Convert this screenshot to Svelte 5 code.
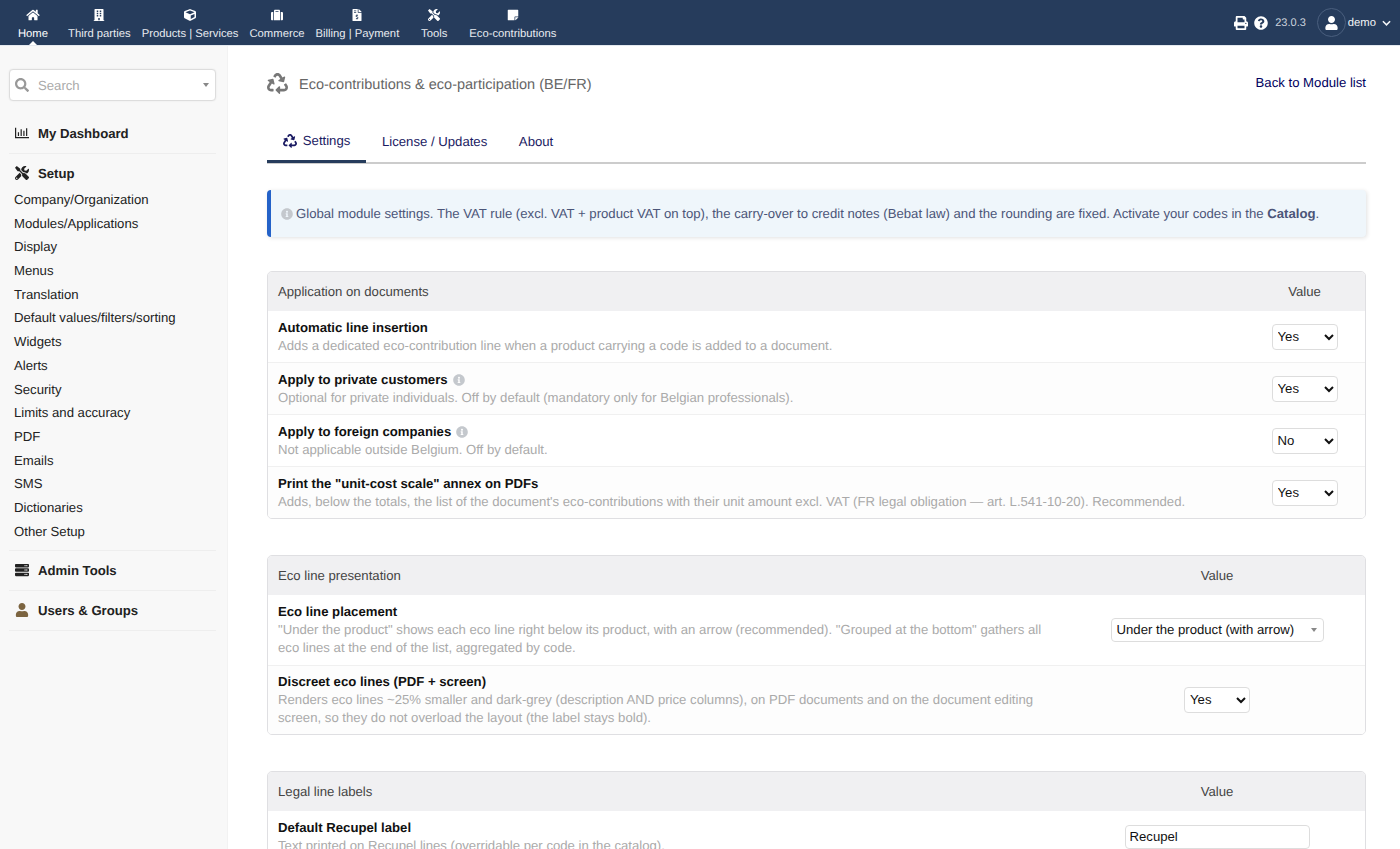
<script lang="ts">
const icons = {
  home: { w: 576, d: 'M280.37 148.26L96 300.11V464a16 16 0 0 0 16 16l112.06-.29a16 16 0 0 0 15.92-16V368a16 16 0 0 1 16-16h64a16 16 0 0 1 16 16v95.64a16 16 0 0 0 16 16.05L464 480a16 16 0 0 0 16-16V300L295.67 148.26a12.19 12.19 0 0 0-15.3 0zM571.6 251.47L488 182.56V44.05a12 12 0 0 0-12-12h-56a12 12 0 0 0-12 12v72.61L318.47 43a48 48 0 0 0-61 0L4.34 251.47a12 12 0 0 0-1.6 16.9l25.5 31A12 12 0 0 0 45.15 301l235.22-193.74a12.19 12.19 0 0 1 15.3 0L530.9 301a12 12 0 0 0 16.9-1.6l25.5-31a12 12 0 0 0-1.7-16.93z' },
  building: { w: 448, d: 'M436 480h-20V24c0-13.255-10.745-24-24-24H56C42.745 0 32 10.745 32 24v456H12c-6.627 0-12 5.373-12 12v20h448v-20c0-6.627-5.373-12-12-12zM128 76c0-6.627 5.373-12 12-12h40c6.627 0 12 5.373 12 12v40c0 6.627-5.373 12-12 12h-40c-6.627 0-12-5.373-12-12V76zm0 96c0-6.627 5.373-12 12-12h40c6.627 0 12 5.373 12 12v40c0 6.627-5.373 12-12 12h-40c-6.627 0-12-5.373-12-12v-40zm52 148h-40c-6.627 0-12-5.373-12-12v-40c0-6.627 5.373-12 12-12h40c6.627 0 12 5.373 12 12v40c0 6.627-5.373 12-12 12zm76 160h-64v-84c0-6.627 5.373-12 12-12h40c6.627 0 12 5.373 12 12v84zm64-172c0 6.627-5.373 12-12 12h-40c-6.627 0-12-5.373-12-12v-40c0-6.627 5.373-12 12-12h40c6.627 0 12 5.373 12 12v40zm0-96c0 6.627-5.373 12-12 12h-40c-6.627 0-12-5.373-12-12v-40c0-6.627 5.373-12 12-12h40c6.627 0 12 5.373 12 12v40zm0-96c0 6.627-5.373 12-12 12h-40c-6.627 0-12-5.373-12-12V76c0-6.627 5.373-12 12-12h40c6.627 0 12 5.373 12 12v40z' },
  cube: { w: 512, d: 'M239.1 6.3l-208 78c-18.7 7-31.1 25-31.1 45v225.1c0 18.2 10.3 34.8 26.5 42.9l208 104c13.5 6.8 29.4 6.8 42.9 0l208-104c16.3-8.1 26.5-24.8 26.5-42.9V129.3c0-20-12.4-37.9-31.1-44.9l-208-78C262 2.2 250 2.2 239.1 6.3zM256 68.4l192 72v1.1l-192 78-192-78v-1.1l192-72zm32 356V275.5l160-65v133.9l-160 80z' },
  suitcase: { w: 512, d: 'M128 480h256V80c0-26.5-21.5-48-48-48H176c-26.5 0-48 21.5-48 48v400zm64-384h128v32H192V96zm320 80v256c0 26.5-21.5 48-48 48h-48V128h48c26.5 0 48 21.5 48 48zM96 480H48c-26.5 0-48-21.5-48-48V176c0-26.5 21.5-48 48-48h48v352z' },
  invoice: { w: 384, d: 'M377 105L279.1 7c-4.5-4.5-10.6-7-17-7H256v128h128v-6.1c0-6.3-2.5-12.4-7-16.9zm-153 31V0H24C10.7 0 0 10.7 0 24v464c0 13.3 10.7 24 24 24h336c13.3 0 24-10.7 24-24V160H248c-13.2 0-24-10.8-24-24zM64 72c0-4.42 3.58-8 8-8h80c4.42 0 8 3.58 8 8v16c0 4.42-3.58 8-8 8H72c-4.42 0-8-3.58-8-8V72zm0 80v-16c0-4.42 3.58-8 8-8h80c4.42 0 8 3.58 8 8v16c0 4.42-3.58 8-8 8H72c-4.42 0-8-3.58-8-8zm144 263.88V440c0 4.42-3.58 8-8 8h-16c-4.42 0-8-3.58-8-8v-24.29c-11.29-.58-22.27-4.52-31.37-11.35-3.9-2.93-4.1-8.77-.57-12.14l11.75-11.21c2.77-2.64 6.89-2.76 10.13-.73 3.87 2.42 8.26 3.72 12.82 3.72h28.11c6.5 0 11.8-5.92 11.8-13.19 0-5.95-3.61-11.19-8.77-12.73l-45-13.5c-18.59-5.58-31.58-23.42-31.58-43.39 0-24.52 19.05-44.44 42.67-45.07V232c0-4.42 3.58-8 8-8h16c4.42 0 8 3.58 8 8v24.29c11.29.58 22.27 4.51 31.37 11.35 3.9 2.93 4.1 8.77.57 12.14l-11.75 11.21c-2.77 2.64-6.89 2.76-10.13.73-3.87-2.43-8.26-3.72-12.82-3.72h-28.11c-6.5 0-11.8 5.92-11.8 13.19 0 5.95 3.61 11.19 8.77 12.73l45 13.5c18.59 5.58 31.58 23.42 31.58 43.39 0 24.53-19.05 44.44-42.67 45.07z' },
  tools: { w: 512, d: 'M501.1 395.7L384 278.6c-23.1-23.1-57.6-27.6-85.4-13.9L192 158.1V96L64 0 0 64l96 128h62.1l106.6 106.6c-13.6 27.8-9.2 62.3 13.9 85.4l117.1 117.1c14.6 14.6 38.2 14.6 52.7 0l52.7-52.7c14.5-14.6 14.5-38.2 0-52.7zM331.7 225c28.3 0 54.9 11 74.9 31l19.4 19.4c15.8-6.9 30.8-16.5 43.8-29.5 37.1-37.1 49.7-89.3 37.9-136.7-2.2-9-13.5-12.1-20.1-5.5l-74.4 74.4-67.9-11.3L334 98.9l74.4-74.4c6.6-6.6 3.4-17.9-5.7-20.2-47.4-11.7-99.6.9-136.6 37.9-28.5 28.5-41.9 66.1-41.2 103.6l82.1 82.1c8.1-1.9 16.5-2.9 24.7-2.9zm-103.9 82l-56.7-56.7L18.7 402.8c-25 25-25 65.5 0 90.5s65.5 25 90.5 0l123.6-123.6c-7.6-19.9-9.9-41.6-5-62.7zM64 472c-13.2 0-24-10.8-24-24 0-13.3 10.7-24 24-24s24 10.7 24 24c0 13.2-10.7 24-24 24z' },
  note: { w: 448, d: 'M312 320h136V56c0-13.3-10.7-24-24-24H24C10.7 32 0 42.7 0 56v400c0 13.3 10.7 24 24 24h264V344c0-13.2 10.8-24 24-24zm129 55l-98 98c-4.5 4.5-10.6 7-17 7h-6V352h128v6.1c0 6.3-2.5 12.4-7 16.9z' },
  print: { w: 512, d: 'M448 192V77.25c0-8.49-3.37-16.62-9.37-22.63L393.37 9.37c-6-6-14.14-9.37-22.63-9.37H96C78.33 0 64 14.33 64 32v160c-35.35 0-64 28.65-64 64v112c0 8.84 7.16 16 16 16h48v96c0 17.67 14.33 32 32 32h320c17.67 0 32-14.33 32-32v-96h48c8.84 0 16-7.16 16-16V256c0-35.35-28.65-64-64-64zm-64 256H128v-96h256v96zm0-224H128V64h192v48c0 8.84 7.16 16 16 16h48v96zm48 72c-13.25 0-24-10.75-24-24 0-13.26 10.75-24 24-24s24 10.74 24 24c0 13.25-10.75 24-24 24z' },
  question: { w: 512, d: 'M504 256c0 136.997-111.043 248-248 248S8 392.997 8 256C8 119.083 119.043 8 256 8s248 111.083 248 248zM262.655 90c-54.497 0-89.255 22.957-116.549 63.758-3.536 5.286-2.353 12.415 2.715 16.258l34.699 26.31c5.205 3.947 12.621 3.008 16.665-2.122 17.864-22.658 30.113-35.797 57.303-35.797 20.429 0 45.698 13.148 45.698 32.958 0 14.976-12.363 22.667-32.534 33.976C247.128 238.528 216 254.941 216 296v4c0 6.627 5.373 12 12 12h56c6.627 0 12-5.373 12-12v-1.333c0-28.462 83.186-29.647 83.186-106.667 0-58.002-60.165-102-116.531-102zM256 338c-25.365 0-46 20.635-46 46 0 25.364 20.635 46 46 46s46-20.636 46-46c0-25.365-20.635-46-46-46z' },
  user: { w: 448, d: 'M224 256c70.7 0 128-57.3 128-128S294.7 0 224 0 96 57.3 96 128s57.3 128 128 128zm89.6 32h-16.7c-22.2 10.2-46.9 16-72.9 16s-50.6-5.8-72.9-16h-16.7C60.2 288 0 348.2 0 422.4V464c0 26.5 21.5 48 48 48h352c26.5 0 48-21.5 48-48v-41.6c0-74.2-60.2-134.4-134.4-134.4z' },
  search: { w: 512, d: 'M505 442.7L405.3 343c-4.5-4.5-10.6-7-17-7H372c27.6-35.3 44-79.7 44-128C416 93.1 322.9 0 208 0S0 93.1 0 208s93.1 208 208 208c48.3 0 92.7-16.4 128-44v16.3c0 6.4 2.5 12.5 7 17l99.7 99.7c9.4 9.4 24.6 9.4 33.9 0l28.3-28.3c9.4-9.4 9.4-24.6.1-34zM208 336c-70.7 0-128-57.2-128-128 0-70.7 57.2-128 128-128 70.7 0 128 57.2 128 128 0 70.7-57.2 128-128 128z' },
  chart: { w: 512, d: 'M0 64h44v340h468v44H0zM104 224h44v140h-44zM204 120h44v244h-44zM304 176h44v188h-44zM404 80h44v284h-44z' },
  server: { w: 512, d: 'M480 160H32c-17.673 0-32-14.327-32-32V64c0-17.673 14.327-32 32-32h448c17.673 0 32 14.327 32 32v64c0 17.673-14.327 32-32 32zm-48-88c-13.255 0-24 10.745-24 24s10.745 24 24 24 24-10.745 24-24-10.745-24-24-24zm-64 0c-13.255 0-24 10.745-24 24s10.745 24 24 24 24-10.745 24-24-10.745-24-24-24zm112 248H32c-17.673 0-32-14.327-32-32v-64c0-17.673 14.327-32 32-32h448c17.673 0 32 14.327 32 32v64c0 17.673-14.327 32-32 32zm-48-88c-13.255 0-24 10.745-24 24s10.745 24 24 24 24-10.745 24-24-10.745-24-24-24zm-64 0c-13.255 0-24 10.745-24 24s10.745 24 24 24 24-10.745 24-24-10.745-24-24-24zm112 248H32c-17.673 0-32-14.327-32-32v-64c0-17.673 14.327-32 32-32h448c17.673 0 32 14.327 32 32v64c0 17.673-14.327 32-32 32zm-48-88c-13.255 0-24 10.745-24 24s10.745 24 24 24 24-10.745 24-24-10.745-24-24-24zm-64 0c-13.255 0-24 10.745-24 24s10.745 24 24 24 24-10.745 24-24-10.745-24-24-24z' },
  recycle: { w: 512, d: 'M184.561 261.903c3.232 13.997-12.123 24.635-24.068 17.168l-40.736-25.455-50.867 81.402C55.606 356.273 70.96 384 96.012 384H148c6.627 0 12 5.373 12 12v40c0 6.627-5.373 12-12 12H96.115c-75.334 0-121.302-83.048-81.408-146.88l50.822-81.388-40.725-25.448c-12.081-7.547-8.966-25.961 4.879-29.158l110.237-25.45c8.611-1.988 17.201 3.381 19.189 11.99l25.452 110.237zm98.561-182.915l41.289 66.076-40.74 25.457c-12.051 7.528-9 25.953 4.879 29.158l110.237 25.45c8.672 1.999 17.215-3.438 19.189-11.99l25.45-110.237c3.197-13.844-11.99-24.719-24.068-17.168l-40.687 25.424-41.263-66.082c-37.521-60.033-125.209-60.171-162.816 0l-17.963 28.766c-3.51 5.62-1.8 13.021 3.82 16.533l33.919 21.195c5.62 3.512 13.024 1.803 16.536-3.817l17.961-28.743c12.712-20.341 41.973-19.676 54.257-.022zM497.288 301.12l-27.515-44.065c-3.511-5.623-10.916-7.334-16.538-3.821l-33.861 21.159c-5.62 3.512-7.33 10.915-3.818 16.536l27.564 44.112c13.257 21.211-2.057 48.96-27.136 48.96H320V336.02c0-14.213-17.242-21.383-27.313-11.313l-80 79.981c-6.249 6.248-6.249 16.379 0 22.627l80 79.989C302.689 517.308 320 510.3 320 495.989V448h95.88c75.274 0 121.335-82.997 81.408-146.88z' },
  info: { w: 512, d: 'M256 8C119.043 8 8 119.083 8 256c0 136.997 111.043 248 248 248s248-111.003 248-248C504 119.083 392.957 8 256 8zm0 110c23.196 0 42 18.804 42 42s-18.804 42-42 42-42-18.804-42-42 18.804-42 42-42zm56 254c0 6.627-5.373 12-12 12h-88c-6.627 0-12-5.373-12-12v-24c0-6.627 5.373-12 12-12h12v-64h-12c-6.627 0-12-5.373-12-12v-24c0-6.627 5.373-12 12-12h64c6.627 0 12 5.373 12 12v100h12c6.627 0 12 5.373 12 12v24z' }
}

const navItems = [
  { label: 'Home', icon: 'home', active: true },
  { label: 'Third parties', icon: 'building' },
  { label: 'Products | Services', icon: 'cube' },
  { label: 'Commerce', icon: 'suitcase' },
  { label: 'Billing | Payment', icon: 'invoice' },
  { label: 'Tools', icon: 'tools' },
  { label: 'Eco-contributions', icon: 'note' }
]

const setupLinks = [
  'Company/Organization', 'Modules/Applications', 'Display', 'Menus', 'Translation',
  'Default values/filters/sorting', 'Widgets', 'Alerts', 'Security', 'Limits and accuracy',
  'PDF', 'Emails', 'SMS', 'Dictionaries', 'Other Setup'
]

const docRows = [
  { title: 'Automatic line insertion', desc: 'Adds a dedicated eco-contribution line when a product carrying a code is added to a document.', value: 'Yes' },
  { title: 'Apply to private customers', info: true, desc: 'Optional for private individuals. Off by default (mandatory only for Belgian professionals).', value: 'Yes' },
  { title: 'Apply to foreign companies', info: true, desc: 'Not applicable outside Belgium. Off by default.', value: 'No' },
  { title: 'Print the "unit-cost scale" annex on PDFs', desc: "Adds, below the totals, the list of the document's eco-contributions with their unit amount excl. VAT (FR legal obligation — art. L.541-10-20). Recommended.", value: 'Yes' }
]
</script>

{#snippet icon(name, cls)}
  <svg class="ico {cls}" viewBox="0 0 {icons[name].w} 512" aria-hidden="true"><path fill="currentColor" d={icons[name].d} /></svg>
{/snippet}

{#snippet yesNo(value)}
  <select class="native" {value}>
    <option>Yes</option>
    <option>No</option>
  </select>
{/snippet}

<div class="page">
  <header class="topbar">
    <nav class="main-nav">
      {#each navItems as item}
        <a href="#top" class="nav-item" class:active={item.active}>
          {@render icon(item.icon, 'nav-ico')}
          <span class="nav-label">{item.label}</span>
        </a>
      {/each}
    </nav>
    <div class="top-right">
      {@render icon('print', 'top-ico')}
      {@render icon('question', 'top-ico')}
      <span class="version">23.0.3</span>
      <span class="avatar">{@render icon('user', 'avatar-ico')}</span>
      <span class="username">demo</span>
      <svg class="caret" viewBox="0 0 10 6" aria-hidden="true"><path d="M1 1l4 4 4-4" fill="none" stroke="currentColor" stroke-width="1.7" /></svg>
    </div>
  </header>

  <div class="body-row">
    <aside class="sidebar">
      <div class="search">
        {@render icon('search', 'search-ico')}
        <span class="placeholder">Search</span>
        <span class="tri"></span>
      </div>

      <a href="#top" class="side-head first">{@render icon('chart', 'side-ico')}My Dashboard</a>
      <div class="side-block">
        <a href="#top" class="side-head setup">{@render icon('tools', 'side-ico')}Setup</a>
        {#each setupLinks as link}
          <a href="#top" class="side-link">{link}</a>
        {/each}
      </div>
      <a href="#top" class="side-head ruled">{@render icon('server', 'side-ico')}Admin Tools</a>
      <a href="#top" class="side-head ruled">{@render icon('user', 'side-ico brown')}Users &amp; Groups</a>
    </aside>

    <main class="content">
      <div class="title-row">
        {@render icon('recycle', 'title-ico')}
        <h1>Eco-contributions &amp; eco-participation (BE/FR)</h1>
        <a href="#top" class="back">Back to Module list</a>
      </div>

      <div class="tabs">
        <a href="#top" class="tab active">{@render icon('recycle', 'tab-ico')}Settings</a>
        <a href="#top" class="tab">License / Updates</a>
        <a href="#top" class="tab">About</a>
      </div>

      <div class="notice">
        {@render icon('info', 'info-ico')}
        <span>Global module settings. The VAT rule (excl. VAT + product VAT on top), the carry-over to credit notes (Bebat law) and the rounding are fixed. Activate your codes in the <strong>Catalog</strong>.</span>
      </div>

      <section class="card narrow">
        <div class="card-head"><span>Application on documents</span><span class="val">Value</span></div>
        {#each docRows as row}
          <div class="row">
            <div class="label">
              <div class="row-title">{row.title}{#if row.info}{@render icon('info', 'info-ico inline')}{/if}</div>
              <div class="row-desc">{row.desc}</div>
            </div>
            <div class="val">{@render yesNo(row.value)}</div>
          </div>
        {/each}
      </section>

      <section class="card wide">
        <div class="card-head"><span>Eco line presentation</span><span class="val">Value</span></div>
        <div class="row tall">
          <div class="label">
            <div class="row-title">Eco line placement</div>
            <div class="row-desc">"Under the product" shows each eco line right below its product, with an arrow (recommended). "Grouped at the bottom" gathers all eco lines at the end of the list, aggregated by code.</div>
          </div>
          <div class="val">
            <div class="select2"><span>Under the product (with arrow)</span><span class="tri"></span></div>
          </div>
        </div>
        <div class="row tall">
          <div class="label">
            <div class="row-title">Discreet eco lines (PDF + screen)</div>
            <div class="row-desc">Renders eco lines ~25% smaller and dark-grey (description AND price columns), on PDF documents and on the document editing screen, so they do not overload the layout (the label stays bold).</div>
          </div>
          <div class="val">{@render yesNo('Yes')}</div>
        </div>
      </section>

      <section class="card wide">
        <div class="card-head"><span>Legal line labels</span><span class="val">Value</span></div>
        <div class="row">
          <div class="label">
            <div class="row-title">Default Recupel label</div>
            <div class="row-desc">Text printed on Recupel lines (overridable per code in the catalog).</div>
          </div>
          <div class="val"><input class="text-input" value="Recupel" /></div>
        </div>
      </section>
    </main>
  </div>
</div>

<style>
  :global(body) {
    margin: 0;
    overflow: hidden;
    font-family: "Liberation Sans", Arial, sans-serif;
    font-size: 13.16px;
    text-rendering: geometricPrecision;
    color: #222;
    background: #fff;
  }

  a {
    text-decoration: none;
    color: inherit;
  }

  .ico {
    display: block;
    flex-shrink: 0;
  }

  .page {
    height: 849px;
    overflow: hidden;
    display: flex;
    flex-direction: column;
  }

  .topbar {
    height: 45px;
    flex-shrink: 0;
    background: #263c5c;
    border-bottom: 1px solid #e4e9ef;
    display: flex;
    justify-content: space-between;
    color: #f4f5f7;
  }

  .main-nav {
    display: flex;
    padding-left: 3.5px;
  }

  .nav-item {
    position: relative;
    display: flex;
    flex-direction: column;
    align-items: center;
    box-sizing: content-box;
    min-width: 48px;
    padding: 9px 5.5px 0;
    font-size: 11.28px;
    color: #e8ebf0;
  }

  .nav-item.active {
    color: #fff;
  }

  .nav-item.active::after {
    content: "";
    position: absolute;
    left: 50%;
    bottom: 0;
    margin-left: -4px;
    border: 4px solid transparent;
    border-top: 0;
    border-bottom-color: #fff;
  }

  .nav-ico {
    width: 14px;
    height: 12px;
    margin-bottom: 6px;
    color: #fff;
  }

  .nav-label {
    white-space: nowrap;
    line-height: 14px;
  }

  .top-right {
    display: flex;
    align-items: center;
    padding-right: 9px;
    font-size: 11.28px;
  }

  .top-ico {
    width: 14px;
    height: 14px;
    margin-right: 6px;
    color: #fff;
  }

  .version {
    margin-left: 1px;
    color: #ccd3dd;
    font-size: 11px;
    margin-right: 11px;
  }

  .avatar {
    width: 27px;
    height: 27px;
    border: 1px solid #4a5f7e;
    border-radius: 50%;
    display: flex;
    align-items: center;
    justify-content: center;
    margin-right: 2px;
  }

  .avatar-ico {
    width: 13px;
    height: 14px;
    color: #fff;
  }

  .username {
    margin-right: 6px;
  }

  .caret {
    width: 9px;
    height: 6px;
  }

  .body-row {
    flex: 1;
    display: flex;
    min-height: 0;
  }

  .sidebar {
    width: 228px;
    flex-shrink: 0;
    box-sizing: border-box;
    padding: 23px 11px 0 9px;
    background: #f8f8f8;
    border-right: 1px solid #f2f2f2;
    color: #222;
  }

  .search {
    height: 32px;
    box-sizing: border-box;
    display: flex;
    align-items: center;
    padding: 0 6px 0 5px;
    background: #fff;
    border: 1px solid #ddd;
    border-radius: 4px;
    box-shadow: 0 0 2px rgba(0, 0, 0, 0.08);
  }

  .search-ico {
    width: 14px;
    height: 14px;
    color: #999;
    margin-right: 9px;
  }

  .placeholder {
    flex: 1;
    color: #aaa;
  }

  .tri {
    width: 0;
    height: 0;
    border: 3.5px solid transparent;
    border-top: 4px solid #888;
    border-bottom: 0;
  }

  .side-head {
    display: flex;
    align-items: center;
    height: 40px;
    padding-left: 6px;
    font-weight: 700;
  }

  .side-head.first {
    margin-top: 12px;
    border-bottom: 1px solid #eee;
  }

  .side-head.setup {
    height: 30px;
    padding-top: 4px;
  }

  .side-head.ruled {
    box-sizing: border-box;
    padding-bottom: 1px;
    border-bottom: 1px solid #eee;
  }

  .side-block {
    border-bottom: 1px solid #eee;
    padding-bottom: 7px;
  }

  .side-ico {
    width: 14px;
    height: 14px;
    margin-right: 9px;
    color: #222;
  }

  .side-ico.brown {
    color: #7c6440;
  }

  .side-link {
    display: block;
    height: 23.7px;
    line-height: 23.7px;
    padding-left: 5px;
    white-space: nowrap;
  }

  .content {
    flex: 1;
    min-width: 0;
    padding: 0 34px 0 39px;
  }

  .title-row {
    display: flex;
    align-items: center;
    height: 75px;
  }

  .title-ico {
    width: 21px;
    height: 21px;
    margin-right: 11px;
    color: #777;
  }

  h1 {
    flex: 1;
    margin: 0;
    padding-top: 2px;
    font-size: 14.5px;
    font-weight: 400;
    color: #666;
  }

  .back {
    color: #00005e;
    margin-bottom: 2px;
  }

  .tabs {
    display: flex;
    height: 41px;
    border-bottom: 2px solid #ccc;
  }

  .tab {
    display: flex;
    align-items: center;
    padding: 0 15.8px 2px;
    color: #1a1a62;
    height: 42px;
    box-sizing: border-box;
  }

  .tab.active {
    padding-bottom: 0;
    border-bottom: 3px solid #263c5c;
  }

  .tab-ico {
    width: 14px;
    height: 14px;
    margin-right: 6px;
  }

  .notice {
    display: flex;
    align-items: center;
    height: 47px;
    box-sizing: border-box;
    margin-top: 26px;
    padding-left: 10px;
    background: #eff6fb;
    border-left: 4px solid #2462c8;
    border-radius: 4px;
    box-shadow: 1px 1px 4px rgba(0, 0, 0, 0.12);
    color: #4b5578;
  }

  .info-ico {
    width: 12px;
    height: 12px;
    margin-right: 3px;
    color: #c4c8cd;
  }

  .info-ico.inline {
    margin: 0 0 0 5px;
  }

  .card {
    margin-top: 34px;
    border: 1px solid #dfdfe2;
    border-radius: 5px;
    overflow: hidden;
  }

  .card.narrow {
    --val: 121px;
  }

  .card.wide {
    --val: 296px;
    margin-top: 36px;
  }

  .card-head {
    display: flex;
    align-items: center;
    height: 39px;
    padding-left: 10px;
    background: #f0f0f2;
    color: #444;
  }

  .card-head > span:first-child {
    flex: 1;
  }

  .val {
    width: var(--val);
    flex-shrink: 0;
    display: flex;
    justify-content: center;
  }

  .row {
    display: flex;
    align-items: center;
    height: 52px;
    box-sizing: border-box;
    padding-left: 10px;
    border-top: 1px solid #f0f0f0;
  }

  .row:nth-child(odd) {
    background: #fdfdfd;
  }

  .card-head + .row {
    height: 51px;
    border-top: 0;
  }

  .card-head + .row.tall,
  .row.tall {
    height: 69.5px;
  }

  .label {
    flex: 1;
    min-width: 0;
    padding-right: 22px;
  }

  .row-title {
    font-weight: 700;
    color: #111;
    line-height: 18px;
    display: flex;
    align-items: center;
  }

  .row-desc {
    color: #aaa;
    line-height: 18px;
  }

  .native {
    width: 66px;
    height: 26px;
    box-sizing: border-box;
    padding: 0 0 0 1px;
    border: 1px solid #ddd;
    border-radius: 4px;
    background: #fff;
    font: inherit;
    color: #111;
  }

  .select2 {
    width: 213px;
    height: 24px;
    box-sizing: border-box;
    display: flex;
    align-items: center;
    justify-content: space-between;
    padding: 0 6px 0 5px;
    border: 1px solid #ddd;
    border-radius: 4px;
    background: #fff;
    color: #111;
  }

  .text-input {
    width: 185px;
    height: 24px;
    box-sizing: border-box;
    padding: 0 4px;
    border: 1px solid #ddd;
    border-radius: 4px;
    font: inherit;
    color: #111;
  }
</style>
